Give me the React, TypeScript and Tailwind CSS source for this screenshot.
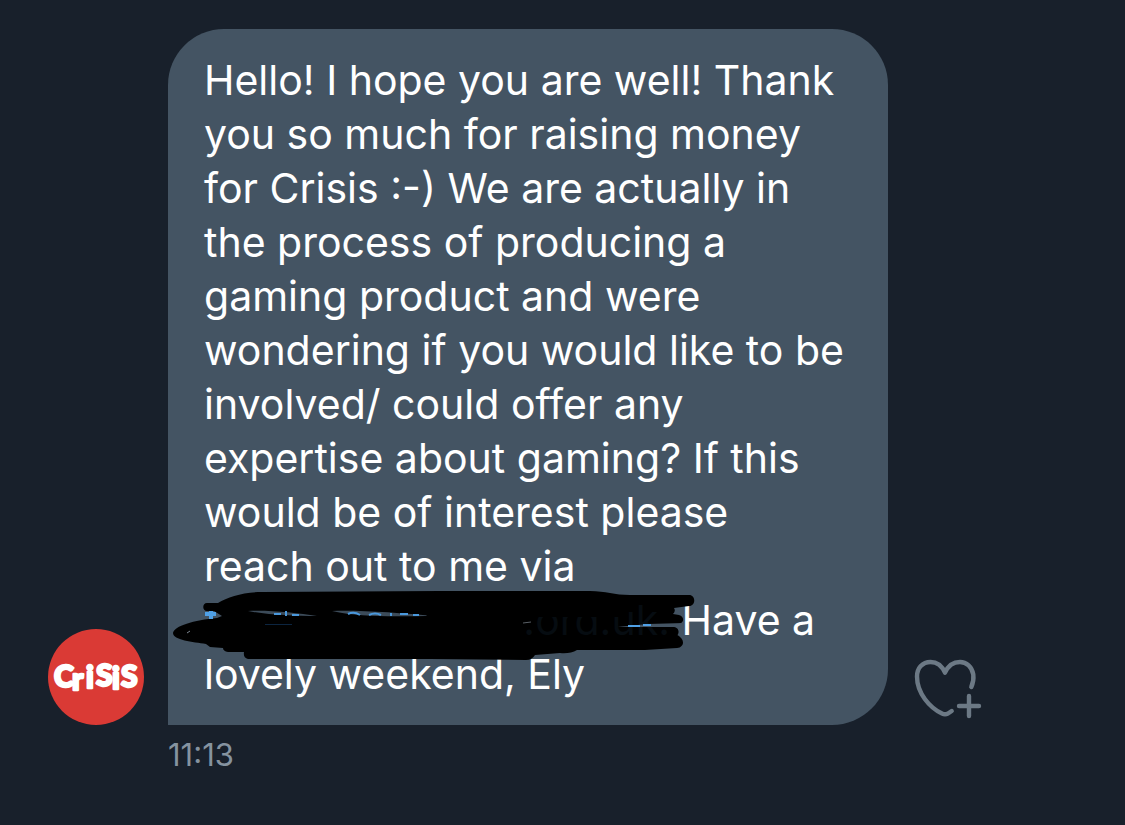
const message = {
  body: 'Hello! I hope you are well! Thank you so much for raising money for Crisis :-) We are actually in the process of producing a gaming product and were wondering if you would like to be involved/ could offer any expertise about gaming? If this would be of interest please reach out to me via',
  closing: 'Have a lovely weekend, Ely',
  time: '11:13',
}

function Avatar() {
  return (
    <a aria-label="Crisis profile" className="size-24 shrink-0 overflow-hidden rounded-full bg-[#da3a35]" href="#crisis">
      <svg className="block size-24" viewBox="48 629 96 96">
        <text
          className="font-['Lato',sans-serif] text-[30px] font-black"
          fill="#fff"
          stroke="#fff"
          strokeLinejoin="round"
          strokeWidth="2.4"
          x="54 72 86 96 112 121"
          y="687 690 688 686 689 687"
        >
          CriSiS
        </text>
      </svg>
    </a>
  )
}

function RedactedLink() {
  return (
    <span className="relative inline-block h-[54px] w-[466px] text-right align-top text-[#060c11]">
      <svg aria-hidden="true" className="absolute -top-2 -left-9 h-20 w-[532px]" viewBox="168 585 532 80">
        <path
          d="M207 603 L218 603 C228 597 243 592 262 592 L440 591 H590 C606 591 614 595 630 595 H689 C696 595 696 606 689 606 L674 608 Q676 611 673 614 L679 615 C685 617 684 623 679 624 L618 627 L674 627 C680 628 679 634 677 636 C685 638 685 647 677 648 L645 650 L577 650 Q570 654 560 653 L535 655 Q532 660 526 660 L430 659 H248 Q243 658 244 652 H228 Q223 651 223 648 L210 647 L206 644 C193 642 173 640 173 633 C174 626 194 620 217 618 L222 616 L214 611 H207 C202 611 202 603 207 603 Z"
          fill="#000"
        />
        <path d="M248 611 C270 610 297 613 317 616 C294 616 268 615 248 611 Z" fill="#3c4b59" />
        <path d="M332 611 C360 610 400 613 434 616 C400 616 362 618 332 611 Z" fill="#3c4b59" />
        <path d="M274 614 h7 M286 611 v5 M292 615 h7 M348 614 q6 -3 12 1 M369 615 q6 -3 12 0 M391 613 v3 M400 614 h8 M413 615 h6" fill="none" stroke="#4a98dc" strokeWidth="2" />
        <path d="M205 614 h11 M211 611 v8" stroke="#4fa0e6" strokeWidth="4" />
        <path d="M265 624.5 H292" stroke="#0c2540" />
        <path d="M523 623 l8 -1" stroke="#5a6067" />
      </svg>
      <span className="relative">.org.uk.</span>
      <svg aria-hidden="true" className="absolute -top-2 -left-9 h-20 w-[532px]" viewBox="168 585 532 80">
        <path d="M430 612 H622 M520 640 H676" fill="none" stroke="#000" strokeLinecap="round" strokeWidth="10" />
        <path d="M618 627 L648 624 L684 623 V627 Z" fill="#445463" />
        <path d="M628 626 h12 M643 625 h8" stroke="#4fa0e6" strokeWidth="2" />
        <path d="M187 633 l3 -2" stroke="#7d8791" />
      </svg>
    </span>
  )
}

function AddReactionButton() {
  return (
    <button aria-label="Add reaction" className="shrink-0 text-[#6c7985]" type="button">
      <svg
        className="block h-[69px] w-[72px]"
        fill="none"
        stroke="currentColor"
        strokeLinecap="round"
        strokeLinejoin="round"
        strokeWidth="4.4"
        viewBox="912 656 72 69"
      >
        <path d="M971.3 687 C973.3 682.5 973.8 678.5 973.3 674.5 C972 667 966.5 662 960 662 C953 662 948 666 945 672.7 C942 666 937 662 930.5 662 C922.5 662 917 668 917 676.5 C917 693 929.5 707.5 942 713.5 Q945 715 948 713.5 L951.7 711" />
        <path d="M969 696 V716 M959 706 H979" />
      </svg>
    </button>
  )
}

export default function App() {
  return (
    <main className="min-h-screen bg-[#18202b] px-12 pt-[29px] pb-12 font-['Inter',sans-serif]">
      <div className="flex items-end gap-6">
        <Avatar />
        <p className="max-w-[720px] flex-1 rounded-[56px] rounded-bl-none bg-[#445463] py-6 pr-10 pl-9 text-[41px] leading-[54px] text-white">
          {message.body} <RedactedLink /> {message.closing}
        </p>
        <AddReactionButton />
      </div>
      <time className="mt-3 block pl-[120px] text-[31px] leading-9 text-[#8593a0]">{message.time}</time>
    </main>
  )
}
